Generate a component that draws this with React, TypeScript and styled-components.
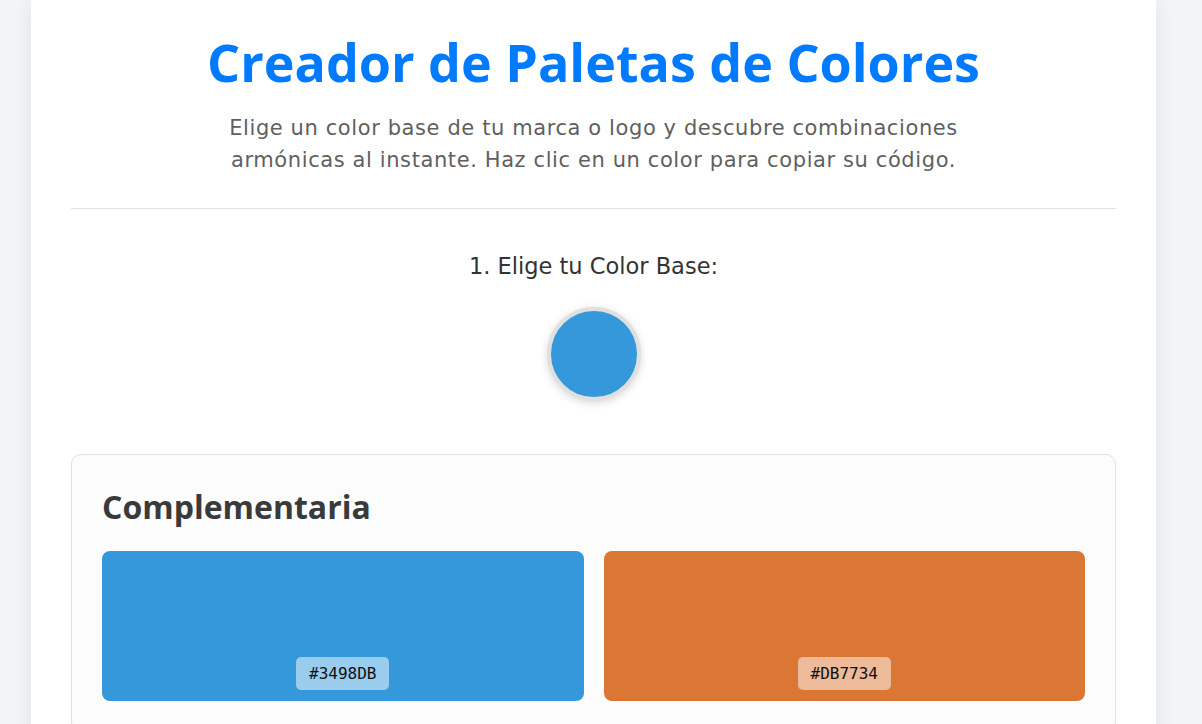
import React from "react";
import styled, { createGlobalStyle } from "styled-components";

const Global = createGlobalStyle`
  html, body { margin: 0; padding: 0; background: #f2f5f8; }
  body { font-family: "DejaVu Sans", "Open Sans", sans-serif; }
`;

const Page = styled.div`
  width: 1187px;
  display: flex;
  justify-content: center;
`;

const Card = styled.main`
  width: 1125px;
  box-sizing: border-box;
  background: #ffffff;
  padding: 31px 40px 40px;
  box-shadow: 0 4px 20px rgba(0, 0, 0, 0.08);
  min-height: 724px;
`;

const Header = styled.header`
  text-align: center;
  padding-bottom: 32px;
  border-bottom: 1px solid #e2e2e2;
`;

const Title = styled.h1`
  margin: 0;
  font-family: "Open Sans", sans-serif;
  font-size: 52px;
  line-height: 1.2;
  font-weight: 700;
  color: #007bff;
`;

const Subtitle = styled.p`
  margin: 19px auto 0;
  max-width: 780px;
  font-size: 21px;
  letter-spacing: 0.6px;
  line-height: 32px;
  color: #5f5f5f;
`;

const Picker = styled.section`
  display: flex;
  flex-direction: column;
  align-items: center;
  padding-top: 42px;
`;

const PickerLabel = styled.h2`
  margin: 0;
  font-size: 22.5px;
  line-height: 1.4;
  font-weight: 400;
  color: #333333;
`;

const ColorCircle = styled.div<{ $color: string }>`
  margin-top: 24px;
  width: 86px;
  height: 86px;
  border-radius: 50%;
  background: ${(p) => p.$color};
  border: 4px solid #e0e0e0;
  box-shadow: 0 2px 8px rgba(0, 0, 0, 0.15);
`;

const Palette = styled.section`
  margin-top: 53px;
  background: #fcfcfc;
  border: 1px solid #e0e0e0;
  border-radius: 10px;
  padding: 31px 30px 30px;
`;

const PaletteTitle = styled.h3`
  margin: 0 0 24px;
  font-family: "Open Sans", sans-serif;
  font-size: 32px;
  line-height: 1.3;
  font-weight: 700;
  color: #3a3a3a;
`;

const Swatches = styled.div`
  display: grid;
  grid-template-columns: 1fr 1fr;
  gap: 20px;
`;

const Swatch = styled.div<{ $color: string }>`
  height: 150px;
  border-radius: 8px;
  background: ${(p) => p.$color};
  display: flex;
  align-items: flex-end;
  justify-content: center;
  padding-bottom: 11px;
  box-sizing: border-box;
  cursor: pointer;
`;

const HexLabel = styled.span`
  background: rgba(255, 255, 255, 0.5);
  border-radius: 5px;
  padding: 7px 13px;
  font-family: "DejaVu Sans Mono", "Liberation Mono", monospace;
  font-size: 16px;
  line-height: 19px;
  color: #111111;
`;

const colors = ["#3498DB", "#DB7734"];

export default function App() {
  return (
    <>
      <Global />
      <Page>
        <Card>
          <Header>
            <Title>Creador de Paletas de Colores</Title>
            <Subtitle>
              Elige un color base de tu marca o logo y descubre combinaciones
              armónicas al instante. Haz clic en un color para copiar su código.
            </Subtitle>
          </Header>
          <Picker>
            <PickerLabel>1. Elige tu Color Base:</PickerLabel>
            <ColorCircle $color="#3498db" />
          </Picker>
          <Palette>
            <PaletteTitle>Complementaria</PaletteTitle>
            <Swatches>
              {colors.map((c) => (
                <Swatch key={c} $color={c}>
                  <HexLabel>{c}</HexLabel>
                </Swatch>
              ))}
            </Swatches>
          </Palette>
        </Card>
      </Page>
    </>
  );
}
